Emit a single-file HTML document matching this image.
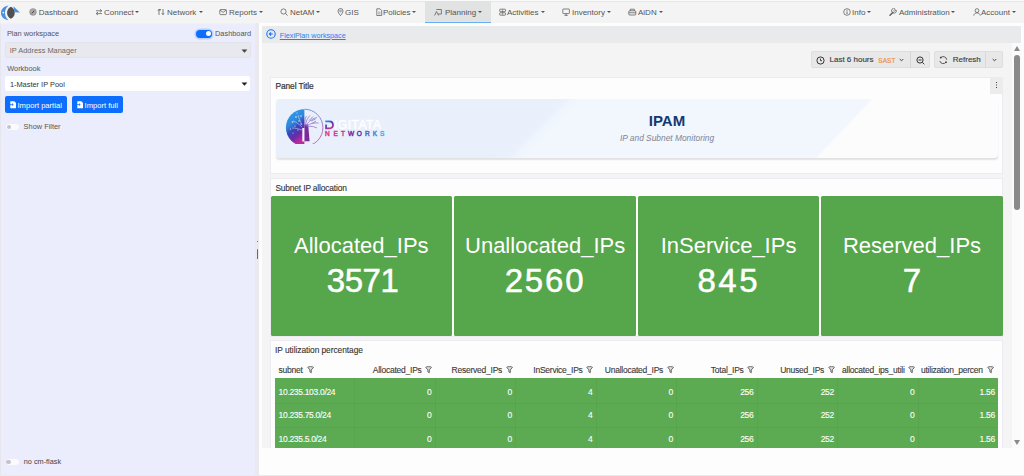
<!DOCTYPE html>
<html><head><meta charset="utf-8">
<style>
*{box-sizing:border-box;margin:0;padding:0}
html,body{width:1024px;height:476px;overflow:hidden;background:#fdfdfd;font-family:"Liberation Sans",sans-serif;}
.abs{position:absolute}
#top{left:0;top:0;width:1024px;height:1px;background:#fafafa}
#nav{left:0;top:1px;width:1024px;height:22px;background:#f4f4f4;border-top:1px solid #e6e6e6}
.ni{position:absolute;top:7.5px;font-size:8px;color:#555;line-height:10px;white-space:nowrap}
.car{width:0;height:0;border-left:2px solid transparent;border-right:2px solid transparent;border-top:2.5px solid #555}
#active{left:425px;top:1px;width:66px;height:22px;background:#e1e2e2;border-bottom:1.5px solid #6aaef3}
#strip{left:0;top:23px;width:1024px;height:2px;background:#fbfbfb}
#side{left:0;top:23px;width:255px;height:453px;background:#ebecfc;border-left:1px solid #e6e6ec;border-top:1px solid #f0f0f6}
#gut{left:255px;top:23px;width:4px;height:453px;background:#e9e9ef}
#content{left:259px;top:23px;width:765px;height:453px;background:#fdfdfd}
#bc{left:262px;top:25.5px;width:759px;height:17px;background:#e9eaec}
#gbg{left:262px;top:42.5px;width:750px;height:406px;background:#f4f4f4}
.lbl{position:absolute;font-size:8px;color:#555;white-space:nowrap}
.sel{position:absolute;border-radius:2px}
.btn{position:absolute;background:#0d6efd;border-radius:2px;color:#fff;font-size:8px;line-height:17px;white-space:nowrap}
.panel{position:absolute;background:#fdfdfd;border:1px solid #ebebf1}
.ptitle{position:absolute;font-size:8px;color:#333;font-weight:bold;white-space:nowrap}
.stat{position:absolute;top:195.6px;height:140.1px;width:182px;background:#56a64b;color:#fff;text-align:center;border-radius:1.5px}
.stat .t{position:absolute;left:0;width:100%;top:232px;font-size:22px}
.stat .v{position:absolute;left:0;width:100%;font-size:33px;letter-spacing:1px;text-indent:1px;-webkit-text-stroke:0.5px #fff}
.th{position:absolute;top:365.1px;font-size:8.5px;letter-spacing:-0.24px;color:#3a3a3a;white-space:nowrap;-webkit-text-stroke:0.12px #3a3a3a}
.cell{position:absolute;font-size:8.5px;letter-spacing:-0.32px;color:#fff;white-space:nowrap;-webkit-text-stroke:0.1px #fff;margin-top:-0.4px}
.vl{position:absolute;top:377.6px;width:1px;height:70px;background:rgba(0,0,0,0.04)}
.hl{position:absolute;left:275px;width:723px;height:1px;background:rgba(0,0,0,0.04)}
</style></head><body>
<div id="top" class="abs"></div>
<div id="nav" class="abs"></div>
<div id="active" class="abs"></div>

<!-- logo -->
<svg class="abs" style="left:0;top:4px" width="22" height="18" viewBox="0 0 22 18">
  <path d="M8.5 1.6 C3.5 2.5 1 5.5 1 9 C1 12.5 3.5 15.5 8.5 16 C6 14 5 11.5 5 9 C5 6.5 6 3.8 8.5 1.6Z" fill="#4a8fe0"/>
  <circle cx="3.3" cy="8.6" r="0.9" fill="#f4f4f4"/>
  <path d="M10.9 2.7 C16 5 16 12.6 10.9 14.8 C5.8 12.6 5.8 5 10.9 2.7 Z" fill="#505050"/>
  <path d="M13.4 2.3 L19.9 8.6 L14.6 8.2 Z" fill="#4a8fe0"/>
</svg>

<!-- nav items -->
<svg class="abs" style="left:29.3px;top:8.3px" width="8.5" height="8.5" viewBox="0 0 8.5 8.5"><circle cx="4" cy="4" r="3.4" fill="#a8a8a8"/><circle cx="4" cy="4" r="3.4" fill="none" stroke="#888" stroke-width="0.5"/><path d="M2.8 5.4 L5.2 2.8" stroke="#444" stroke-width="1"/></svg>
<div class="ni" style="left:38.7px">Dashboard</div>
<svg class="abs" style="left:94.5px;top:8.3px" width="8.5" height="8.5" viewBox="0 0 8.5 8.5"><path d="M1 2.8 H6.5 M5 1.3 L6.8 2.8 L5 4.3 M7 5.6 H1.5 M3 4.1 L1.2 5.6 L3 7.1" fill="none" stroke="#5a5a5a" stroke-width="0.75"/></svg>
<div class="ni" style="left:104px">Connect</div>
<div class="car abs" style="left:135px;top:10.8px"></div>
<svg class="abs" style="left:157px;top:8.3px" width="8.5" height="8.5" viewBox="0 0 8.5 8.5"><path d="M2 7 V1.5 M0.8 2.8 L2 1.3 L3.2 2.8 M6 1 V6.5 M4.8 5.2 L6 6.7 L7.2 5.2 M2 1.5 H4" fill="none" stroke="#5a5a5a" stroke-width="0.75"/></svg>
<div class="ni" style="left:167px">Network</div>
<div class="car abs" style="left:199px;top:10.8px"></div>
<svg class="abs" style="left:219px;top:8.3px" width="8.5" height="8.5" viewBox="0 0 8.5 8.5"><rect x="0.8" y="1.6" width="6.6" height="5" rx="0.8" fill="none" stroke="#5a5a5a" stroke-width="0.75"/><path d="M1 2 L4.1 4.4 L7.2 2" fill="none" stroke="#5a5a5a" stroke-width="0.75"/></svg>
<div class="ni" style="left:229px">Reports</div>
<div class="car abs" style="left:259px;top:10.8px"></div>
<svg class="abs" style="left:280px;top:8.3px" width="8.5" height="8.5" viewBox="0 0 8.5 8.5"><circle cx="3.5" cy="3.5" r="2.6" fill="none" stroke="#5a5a5a" stroke-width="0.75"/><path d="M5.4 5.4 L7.5 7.5" stroke="#5a5a5a" stroke-width="0.9"/></svg>
<div class="ni" style="left:290px">NetAM</div>
<div class="car abs" style="left:316px;top:10.8px"></div>
<svg class="abs" style="left:337px;top:8.3px" width="8.5" height="8.5" viewBox="0 0 8.5 8.5"><path d="M3.5 7.6 C2 5.6 1 4.3 1 3 A2.5 2.5 0 0 1 6 3 C6 4.3 5 5.6 3.5 7.6Z" fill="none" stroke="#5a5a5a" stroke-width="0.75"/><circle cx="3.5" cy="3" r="0.9" fill="none" stroke="#5a5a5a" stroke-width="0.6"/></svg>
<div class="ni" style="left:345px">GIS</div>
<svg class="abs" style="left:375.5px;top:8.3px" width="8.5" height="8.5" viewBox="0 0 8.5 8.5"><path d="M0.8 0.8 H4 L5.7 2.5 V7.5 H0.8 Z" fill="none" stroke="#5a5a5a" stroke-width="0.75"/><path d="M2 4.2 H4.5 M2 5.8 H4.5" stroke="#5a5a5a" stroke-width="0.5"/></svg>
<div class="ni" style="left:383px">Policies</div>
<div class="car abs" style="left:412px;top:10.8px"></div>
<svg class="abs" style="left:434px;top:8.3px" width="8.5" height="8.5" viewBox="0 0 8.5 8.5"><path d="M2.4 1.5 H7.4 V6 H4" fill="none" stroke="#5a5a5a" stroke-width="0.75"/><path d="M0.6 7.5 L2.5 3.5 L4.6 7.5" fill="none" stroke="#5a5a5a" stroke-width="0.75"/></svg>
<div class="ni" style="left:445px">Planning</div>
<div class="car abs" style="left:478px;top:10.8px"></div>
<svg class="abs" style="left:498.5px;top:8.3px" width="8.5" height="8.5" viewBox="0 0 8.5 8.5"><rect x="0.7" y="1.2" width="5.8" height="2.4" rx="0.6" fill="none" stroke="#5a5a5a" stroke-width="0.75"/><rect x="0.7" y="4.8" width="5.8" height="2.4" rx="0.6" fill="none" stroke="#5a5a5a" stroke-width="0.75"/><path d="M3.6 1.2 V7.2" stroke="#5a5a5a" stroke-width="0.5"/></svg>
<div class="ni" style="left:507px">Activities</div>
<div class="car abs" style="left:541px;top:10.8px"></div>
<svg class="abs" style="left:562px;top:8.3px" width="8.5" height="8.5" viewBox="0 0 8.5 8.5"><rect x="0.8" y="1" width="6.6" height="4.6" rx="0.6" fill="none" stroke="#5a5a5a" stroke-width="0.75"/><path d="M2.5 7.4 H5.7 M4.1 5.6 V7.4" stroke="#5a5a5a" stroke-width="0.75"/></svg>
<div class="ni" style="left:572px">Inventory</div>
<div class="car abs" style="left:607px;top:10.8px"></div>
<svg class="abs" style="left:628px;top:8.3px" width="8.5" height="8.5" viewBox="0 0 8.5 8.5"><rect x="0.8" y="2.8" width="7" height="4.2" rx="0.8" fill="none" stroke="#5a5a5a" stroke-width="0.75"/><path d="M2.3 2.8 V1.2 H6.3 V2.8 M0.8 4.8 H7.8" fill="none" stroke="#5a5a5a" stroke-width="0.75"/></svg>
<div class="ni" style="left:638px">AiDN</div>
<div class="car abs" style="left:659px;top:10.8px"></div>
<svg class="abs" style="left:843px;top:8.3px" width="8.5" height="8.5" viewBox="0 0 8.5 8.5"><circle cx="4" cy="4" r="3.3" fill="none" stroke="#5a5a5a" stroke-width="0.75"/><path d="M4 3.4 V6" stroke="#5a5a5a" stroke-width="0.9"/><circle cx="4" cy="2.2" r="0.5" fill="#5a5a5a"/></svg>
<div class="ni" style="left:852px">Info</div>
<div class="car abs" style="left:867px;top:10.8px"></div>
<svg class="abs" style="left:889px;top:8.3px" width="8.5" height="8.5" viewBox="0 0 8.5 8.5"><path d="M1 7.2 L4 4.2" stroke="#5a5a5a" stroke-width="1.4" stroke-linecap="round"/><path d="M3.6 4.4 A2.1 2.1 0 1 1 6.2 1.2 L5 2.6 L5.8 3.4 L7.1 2.1 A2.1 2.1 0 0 1 3.9 4.7" fill="none" stroke="#5a5a5a" stroke-width="0.75"/></svg>
<div class="ni" style="left:899px">Administration</div>
<div class="car abs" style="left:951px;top:10.8px"></div>
<svg class="abs" style="left:973px;top:8.3px" width="8.5" height="8.5" viewBox="0 0 8.5 8.5"><circle cx="4" cy="2.6" r="1.9" fill="none" stroke="#5a5a5a" stroke-width="0.75"/><path d="M0.8 7.6 C1 5.6 2.4 4.9 4 4.9 C5.6 4.9 7 5.6 7.2 7.6" fill="none" stroke="#5a5a5a" stroke-width="0.75"/></svg>
<div class="ni" style="left:981px">Account</div>
<div class="car abs" style="left:1012px;top:10.8px"></div>

<div id="strip" class="abs"></div>
<div id="side" class="abs"></div>
<div id="gut" class="abs"></div>
<div id="content" class="abs"></div>
<div id="bc" class="abs"></div>
<div id="gbg" class="abs"></div>

<div class="abs" style="left:256.8px;top:241.3px;width:1.2px;height:1.2px;background:#777"></div>
<div class="abs" style="left:256.8px;top:248.7px;width:1.3px;height:10.3px;background:#6a6a6a;border-radius:0.5px"></div>
<!-- sidebar -->
<div class="lbl" style="left:6.9px;top:28.5px;font-size:7.4px;">Plan workspace</div>
<div class="abs" style="left:196px;top:30px;width:15.5px;height:7.5px;border-radius:4px;background:#0d6efd;box-shadow:0 0 0 1.6px rgba(13,110,253,0.22)"></div>
<div class="abs" style="left:205.5px;top:31.2px;width:5px;height:5px;border-radius:50%;background:#fff"></div>
<div class="lbl" style="left:215px;top:28.6px;font-size:7.4px;">Dashboard</div>
<div class="sel" style="left:5px;top:41.5px;width:245.5px;height:16px;background:#e8e9ef;border:1px solid #e2e3ec"></div>
<div class="lbl" style="left:9.8px;top:46px;color:#6a6a6a;font-size:7.4px;">IP Address Manager</div>
<svg class="abs" style="left:240.5px;top:48.5px" width="7" height="4.5" viewBox="0 0 7 4.5"><path d="M0.5 0.4 H6.4 L3.45 3.7 Z" fill="#454545"/></svg>
<div class="lbl" style="left:7.2px;top:63.7px;font-size:7.4px;">Workbook</div>
<div class="sel" style="left:5.3px;top:76px;width:245.2px;height:15px;background:#fff"></div>
<div class="lbl" style="left:9.9px;top:80px;color:#333;font-size:7.4px;">1-Master IP Pool</div>
<svg class="abs" style="left:240.5px;top:82px" width="7" height="4.5" viewBox="0 0 7 4.5"><path d="M0.5 0.4 H6.4 L3.45 3.7 Z" fill="#222"/></svg>
<div class="btn" style="left:4.7px;top:95.9px;width:62.5px;height:16.8px"></div>
<div class="btn" style="left:71.8px;top:95.9px;width:51.2px;height:16.8px"></div>
<svg class="abs" style="left:9.5px;top:101px" width="6.5" height="7.5" viewBox="0 0 6.5 7.5"><path d="M0.3 0.3 H4.4 L6.2 2.1 V7.2 H0.3 Z" fill="#fff"/><path d="M0 3.6 H3.2 M2 2.5 L3.2 3.6 L2 4.7" fill="none" stroke="#0d6efd" stroke-width="0.8"/></svg>
<svg class="abs" style="left:76.6px;top:101px" width="6.5" height="7.5" viewBox="0 0 6.5 7.5"><path d="M0.3 0.3 H4.4 L6.2 2.1 V7.2 H0.3 Z" fill="#fff"/><path d="M0 3.6 H3.2 M2 2.5 L3.2 3.6 L2 4.7" fill="none" stroke="#0d6efd" stroke-width="0.8"/></svg>
<div class="lbl" style="left:17.5px;top:100.6px;color:#fff;font-size:7.6px">Import partial</div>
<div class="lbl" style="left:84.6px;top:100.6px;color:#fff;font-size:7.6px">Import full</div>
<div class="abs" style="left:5.7px;top:123.6px;width:13.2px;height:6.8px;border-radius:3.5px;background:#fbfbfe"></div>
<div class="abs" style="left:6.6px;top:124.7px;width:4.5px;height:4.5px;border-radius:50%;background:#c4c4c8"></div>
<div class="lbl" style="left:23.6px;top:122.4px;font-size:7.4px;">Show Filter</div>
<div class="abs" style="left:5.5px;top:458.6px;width:13.6px;height:6.6px;border-radius:3.5px;background:#fbfbfe"></div>
<div class="abs" style="left:6.4px;top:459.6px;width:4.6px;height:4.6px;border-radius:50%;background:#c4c4c8"></div>
<div class="lbl" style="left:23.8px;top:457.4px;font-size:7.3px;color:#444">no cm-flask</div>

<!-- breadcrumb -->
<svg class="abs" style="left:266px;top:29px" width="10" height="10" viewBox="0 0 10 10"><circle cx="5" cy="5" r="4.2" fill="none" stroke="#1a73f5" stroke-width="1.1"/><path d="M6.8 5 H3.6 M5 3.4 L3.4 5 L5 6.6" fill="none" stroke="#1a73f5" stroke-width="1.1"/></svg>
<div class="lbl" style="left:279.8px;top:30.6px;font-size:7.2px;color:#2f7af5;text-decoration:underline;text-decoration-thickness:0.6px;text-underline-offset:1px">FlexiPlan workspace</div>

<!-- time picker -->
<div class="abs" style="left:811px;top:51px;width:119px;height:17px;background:#e8e8e8;border:1px solid #dedede;border-radius:2px"></div>
<div class="abs" style="left:910px;top:51px;width:1px;height:17px;background:#d6d6d6"></div>
<div class="abs" style="left:934px;top:51px;width:69px;height:17px;background:#e8e8e8;border:1px solid #dedede;border-radius:2px"></div>
<div class="abs" style="left:985px;top:51px;width:1px;height:17px;background:#d9d9d9"></div>
<svg class="abs" style="left:816px;top:55.5px" width="9" height="9" viewBox="0 0 9 9"><circle cx="4.5" cy="4.5" r="3.6" fill="none" stroke="#333" stroke-width="1"/><path d="M4.5 2.5 V4.7 H6" fill="none" stroke="#333" stroke-width="0.9"/></svg>
<div class="lbl" style="left:829.5px;top:55.2px;color:#3a3d45;-webkit-text-stroke:0.15px #3a3d45">Last 6 hours</div>
<div class="lbl" style="left:878.3px;top:56.5px;color:#e8904a;font-size:6.4px;-webkit-text-stroke:0.2px #e8904a;letter-spacing:0.1px">SAST</div>
<svg class="abs" style="left:899px;top:57.5px" width="5" height="4" viewBox="0 0 5 4"><path d="M0.7 1 L2.5 2.8 L4.3 1" fill="none" stroke="#333" stroke-width="0.9"/></svg>
<svg class="abs" style="left:915.5px;top:55.5px" width="9" height="9" viewBox="0 0 9 9"><circle cx="4" cy="4" r="3.1" fill="none" stroke="#333" stroke-width="1"/><path d="M2.5 4 H5.5 M6.3 6.3 L8.3 8.3" stroke="#333" stroke-width="1"/></svg>
<svg class="abs" style="left:939px;top:55.5px" width="9" height="9" viewBox="0 0 9 9"><path d="M1.77 1.58 A3.5 3.5 0 0 1 7.69 3.79 M7.00 6.21 A3.5 3.5 0 0 1 0.82 5.01" fill="none" stroke="#3a3d45" stroke-width="0.85"/><circle cx="1.77" cy="1.58" r="0.9" fill="#3a3d45"/><circle cx="7.00" cy="6.21" r="0.9" fill="#3a3d45"/></svg>
<div class="lbl" style="left:952.8px;top:55.2px;color:#3a3d45;-webkit-text-stroke:0.15px #3a3d45">Refresh</div>
<svg class="abs" style="left:991.5px;top:57.5px" width="5" height="4" viewBox="0 0 5 4"><path d="M0.7 1 L2.5 2.8 L4.3 1" fill="none" stroke="#333" stroke-width="0.9"/></svg>

<!-- panel 1 -->
<div class="panel" style="left:270px;top:77px;width:733px;height:96.6px"></div>
<div class="abs" style="left:990px;top:77px;width:12.5px;height:17px;background:#ececec"></div>
<div class="abs" style="left:995.5px;top:82px;width:1.2px;height:1.2px;background:#444;box-shadow:0 2.5px 0 #444,0 5px 0 #444"></div>
<div class="ptitle" style="left:275.5px;top:80.6px;font-weight:normal;font-size:8.4px;letter-spacing:-0.1px;-webkit-text-stroke:0.2px #333">Panel Title</div>
<div class="abs" style="left:275.5px;top:98.5px;width:722.5px;height:59.5px;border-radius:4px;overflow:hidden;background:#fcfcfd;box-shadow:0 2px 1.5px -0.5px rgba(0,0,0,0.11)"><svg width="722.5" height="59.5" viewBox="0 0 722.5 59.5" style="display:block"><defs><filter id="bl" x="-5%" y="-20%" width="110%" height="140%"><feGaussianBlur stdDeviation="1.2"/></filter><filter id="bl2" x="-5%" y="-20%" width="110%" height="140%"><feGaussianBlur stdDeviation="4"/></filter></defs><path d="M-10 -10 H605.5 L529.5 70 H-10 Z" fill="#f2f6fd" filter="url(#bl)"/><path d="M-10 -10 H304 L224 70 H-10 Z" fill="#e9f0fc" filter="url(#bl2)"/></svg></div>
<!-- logo banner -->
<svg class="abs" style="left:280px;top:104px" width="110" height="40" viewBox="280 104 110 40">
  <defs>
   <linearGradient id="lg1" x1="0" y1="0" x2="0.4" y2="1"><stop offset="0" stop-color="#2ea6ec"/><stop offset="0.45" stop-color="#2f86dc"/><stop offset="0.62" stop-color="#3a44bb"/><stop offset="0.82" stop-color="#6a2ba8"/><stop offset="1" stop-color="#bb2a9a"/></linearGradient>
   <linearGradient id="lg2" x1="0" y1="0" x2="0" y2="1"><stop offset="0" stop-color="#5a7ad8"/><stop offset="1" stop-color="#d03a9a"/></linearGradient>
   <linearGradient id="lg3" x1="0" y1="0" x2="0.6" y2="1"><stop offset="0" stop-color="#2fa0ea"/><stop offset="0.5" stop-color="#4a3ab8"/><stop offset="1" stop-color="#d0308f"/></linearGradient>
  </defs>
  <path d="M304.4 109.2 A18.5 18.5 0 0 0 304.4 146.2 Z" fill="url(#lg1)"/>
  <path d="M304.4 109.2 A18.5 18.5 0 0 1 304.4 146.2" fill="none" stroke="url(#lg2)" stroke-width="0.8"/>
  <path d="M304.4 124.5 L308.2 124.5 C308.6 130 309.2 136 309.6 141.3 L304.4 141.3 Z" fill="#7a2a9c"/>
  <path d="M302.3 128 L304.3 128 L304.3 141.5 L302.3 141.5 Z" fill="#f2f4fd"/>
  <g fill="none" stroke="#8a70c8" stroke-width="0.9" opacity="0.85">
    <path d="M306 126 C308 122 311 119 317 117.5"/>
    <path d="M306.5 126 C310 123.5 314 122.5 318.5 123"/>
    <path d="M305.5 125 C306 121 307.5 118 310 115.5"/>
    <path d="M307 126.5 C311 126 314 126.5 317 128"/>
    <path d="M305 125.5 C304.5 121 305 118 306.5 116"/>
    <path d="M309 120.5 L313 116.5 M311 121 L315.5 119 M312 123.5 L316 121"/>
  </g>
  <g fill="#ffffff" opacity="0.9">
    <circle cx="296" cy="117" r="0.8"/><circle cx="292.5" cy="122" r="0.7"/><circle cx="299" cy="121" r="0.7"/><circle cx="295" cy="126" r="0.6"/>
    <circle cx="301" cy="116" r="0.7"/><circle cx="290.5" cy="129" r="0.6"/><circle cx="298" cy="130" r="0.6"/><circle cx="293" cy="133" r="0.5"/><circle cx="301" cy="124" r="0.6"/><circle cx="297" cy="113" r="0.5"/>
  </g>
  <g stroke="#ffffff" stroke-width="0.6" opacity="0.7" fill="none"><path d="M302 127 C299 124 296 122 293 121 M302 125 C300 121 299 118 298 115 M302 130 C299 129 296 128 292 128"/></g>
  <path d="M325.2 120.6 H329.5 C332.6 120.6 333.9 122.7 333.9 125 C333.9 127.3 332.6 129.2 329.5 129.2 H325.2 V124.6 H326.9 V127.6 H329.3 C331.2 127.6 332.1 126.5 332.1 125 C332.1 123.4 331.2 122.2 329.3 122.2 H325.2 Z" fill="url(#lg3)"/>
  <text x="334" y="129.3" font-family="Liberation Sans" font-size="12.1" fill="#ffffff" stroke="#ffffff" stroke-width="0.4" letter-spacing="0.45">IGITATA</text>
  <g font-family="Liberation Sans" font-size="6.5" stroke-width="0.45" style="paint-order:stroke">
    <text x="325" y="135.9" fill="#d83a8c" stroke="#d83a8c">N</text><text x="333.4" y="135.9" fill="#d23b8e" stroke="#d23b8e">E</text><text x="341" y="135.9" fill="#c23a92" stroke="#c23a92">T</text>
    <text x="348" y="135.9" fill="#7b2fa6" stroke="#7b2fa6">W</text><text x="356.8" y="135.9" fill="#5a3ab4" stroke="#5a3ab4">O</text><text x="364.9" y="135.9" fill="#4a68c8" stroke="#4a68c8">R</text>
    <text x="372.8" y="135.9" fill="#4a8ad8" stroke="#4a8ad8">K</text><text x="380" y="135.9" fill="#4ab2ea" stroke="#4ab2ea">S</text>
  </g>
</svg>
<div class="abs" style="left:599px;top:111.5px;width:136px;text-align:center;font-size:15px;font-weight:bold;color:#163a6e">IPAM</div>
<div class="abs" style="left:599px;top:133.2px;width:136px;text-align:center;font-size:8.4px;font-style:italic;color:#7d8596">IP and Subnet Monitoring</div>

<!-- panel 2 -->
<div class="panel" style="left:270px;top:178.4px;width:733px;height:158.2px"></div>
<div class="ptitle" style="left:275.4px;top:182.6px;font-weight:normal;color:#333;font-size:8.4px;letter-spacing:-0.15px;-webkit-text-stroke:0.12px #333">Subnet IP allocation</div>
<div class="stat" style="left:270.5px;width:181.6px"><div class="t" style="top:37px">Allocated_IPs</div><div class="v" style="top:66.5px;left:1.5px;letter-spacing:-0.5px;text-indent:-0.5px">3571</div></div>
<div class="stat" style="left:454.2px;width:181.9px"><div class="t" style="top:37px">Unallocated_IPs</div><div class="v" style="top:66.5px;left:-1px;letter-spacing:1.8px;text-indent:1.8px">2560</div></div>
<div class="stat" style="left:638px;width:181.1px"><div class="t" style="top:37px">InService_IPs</div><div class="v" style="top:66.5px;left:-1px;letter-spacing:2.5px;text-indent:2.5px">845</div></div>
<div class="stat" style="left:821.2px;width:181.6px"><div class="t" style="top:37px">Reserved_IPs</div><div class="v" style="top:66.5px;letter-spacing:0px;text-indent:0px">7</div></div>

<!-- panel 3 -->
<div class="panel" style="left:270px;top:340.3px;width:733px;height:120px"></div>
<div class="ptitle" style="left:275.1px;top:344.8px;font-weight:normal;color:#333;font-size:8.4px;letter-spacing:-0.06px;-webkit-text-stroke:0.1px #333">IP utilization percentage</div>
<div class="abs" style="left:275px;top:377.6px;width:723.3px;height:70px;background:#5cab53"></div>

<div id="tbl"><div class="th" style="left:278.6px">subnet</div>
<svg class="abs" style="left:307.0px;top:366.2px" width="7.2" height="7.4" viewBox="0 0 7.2 7.4"><path d="M0.7 1.3 C0.7 0.4 6.5 0.4 6.5 1.3 L4.3 3.9 V6.7 L2.9 6 V3.9 Z" fill="#ddd" stroke="#6a6a6a" stroke-width="1" stroke-linejoin="round"/></svg>
<div class="cell" style="left:278.6px;top:387.2px">10.235.103.0/24</div>
<div class="cell" style="left:278.6px;top:410.6px">10.235.75.0/24</div>
<div class="cell" style="left:278.6px;top:434.1px">10.235.5.0/24</div>
<div class="th" style="right:602.4px;text-align:right">Allocated_IPs</div>
<svg class="abs" style="left:425.2px;top:366.2px" width="7.2" height="7.4" viewBox="0 0 7.2 7.4"><path d="M0.7 1.3 C0.7 0.4 6.5 0.4 6.5 1.3 L4.3 3.9 V6.7 L2.9 6 V3.9 Z" fill="#ddd" stroke="#6a6a6a" stroke-width="1" stroke-linejoin="round"/></svg>
<div class="vl" style="left:354.4px"></div>
<div class="cell" style="right:592.6px;top:387.2px">0</div>
<div class="cell" style="right:592.6px;top:410.6px">0</div>
<div class="cell" style="right:592.6px;top:434.1px">0</div>
<div class="th" style="right:521.9px;text-align:right">Reserved_IPs</div>
<svg class="abs" style="left:505.7px;top:366.2px" width="7.2" height="7.4" viewBox="0 0 7.2 7.4"><path d="M0.7 1.3 C0.7 0.4 6.5 0.4 6.5 1.3 L4.3 3.9 V6.7 L2.9 6 V3.9 Z" fill="#ddd" stroke="#6a6a6a" stroke-width="1" stroke-linejoin="round"/></svg>
<div class="vl" style="left:434.9px"></div>
<div class="cell" style="right:512.1px;top:387.2px">0</div>
<div class="cell" style="right:512.1px;top:410.6px">0</div>
<div class="cell" style="right:512.1px;top:434.1px">0</div>
<div class="th" style="right:441.4px;text-align:right">InService_IPs</div>
<svg class="abs" style="left:586.2px;top:366.2px" width="7.2" height="7.4" viewBox="0 0 7.2 7.4"><path d="M0.7 1.3 C0.7 0.4 6.5 0.4 6.5 1.3 L4.3 3.9 V6.7 L2.9 6 V3.9 Z" fill="#ddd" stroke="#6a6a6a" stroke-width="1" stroke-linejoin="round"/></svg>
<div class="vl" style="left:515.4px"></div>
<div class="cell" style="right:431.6px;top:387.2px">4</div>
<div class="cell" style="right:431.6px;top:410.6px">4</div>
<div class="cell" style="right:431.6px;top:434.1px">4</div>
<div class="th" style="right:360.9px;text-align:right">Unallocated_IPs</div>
<svg class="abs" style="left:666.7px;top:366.2px" width="7.2" height="7.4" viewBox="0 0 7.2 7.4"><path d="M0.7 1.3 C0.7 0.4 6.5 0.4 6.5 1.3 L4.3 3.9 V6.7 L2.9 6 V3.9 Z" fill="#ddd" stroke="#6a6a6a" stroke-width="1" stroke-linejoin="round"/></svg>
<div class="vl" style="left:595.9px"></div>
<div class="cell" style="right:351.1px;top:387.2px">0</div>
<div class="cell" style="right:351.1px;top:410.6px">0</div>
<div class="cell" style="right:351.1px;top:434.1px">0</div>
<div class="th" style="right:280.4px;text-align:right">Total_IPs</div>
<svg class="abs" style="left:747.2px;top:366.2px" width="7.2" height="7.4" viewBox="0 0 7.2 7.4"><path d="M0.7 1.3 C0.7 0.4 6.5 0.4 6.5 1.3 L4.3 3.9 V6.7 L2.9 6 V3.9 Z" fill="#ddd" stroke="#6a6a6a" stroke-width="1" stroke-linejoin="round"/></svg>
<div class="vl" style="left:676.4px"></div>
<div class="cell" style="right:270.6px;top:387.2px">256</div>
<div class="cell" style="right:270.6px;top:410.6px">256</div>
<div class="cell" style="right:270.6px;top:434.1px">256</div>
<div class="th" style="right:199.9px;text-align:right">Unused_IPs</div>
<svg class="abs" style="left:827.7px;top:366.2px" width="7.2" height="7.4" viewBox="0 0 7.2 7.4"><path d="M0.7 1.3 C0.7 0.4 6.5 0.4 6.5 1.3 L4.3 3.9 V6.7 L2.9 6 V3.9 Z" fill="#ddd" stroke="#6a6a6a" stroke-width="1" stroke-linejoin="round"/></svg>
<div class="vl" style="left:756.9px"></div>
<div class="cell" style="right:190.1px;top:387.2px">252</div>
<div class="cell" style="right:190.1px;top:410.6px">252</div>
<div class="cell" style="right:190.1px;top:434.1px">252</div>
<div class="th" style="right:119.4px;text-align:right">allocated_ips_utili</div>
<svg class="abs" style="left:908.2px;top:366.2px" width="7.2" height="7.4" viewBox="0 0 7.2 7.4"><path d="M0.7 1.3 C0.7 0.4 6.5 0.4 6.5 1.3 L4.3 3.9 V6.7 L2.9 6 V3.9 Z" fill="#ddd" stroke="#6a6a6a" stroke-width="1" stroke-linejoin="round"/></svg>
<div class="vl" style="left:837.4px"></div>
<div class="cell" style="right:109.6px;top:387.2px">0</div>
<div class="cell" style="right:109.6px;top:410.6px">0</div>
<div class="cell" style="right:109.6px;top:434.1px">0</div>
<div class="th" style="left:921px;width:62px;overflow:hidden">utilization_percentage</div>
<svg class="abs" style="left:987.2px;top:366.2px" width="7.2" height="7.4" viewBox="0 0 7.2 7.4"><path d="M0.7 1.3 C0.7 0.4 6.5 0.4 6.5 1.3 L4.3 3.9 V6.7 L2.9 6 V3.9 Z" fill="#ddd" stroke="#6a6a6a" stroke-width="1" stroke-linejoin="round"/></svg>
<div class="vl" style="left:917.9px"></div>
<div class="cell" style="right:29.2px;top:387.2px">1.56</div>
<div class="cell" style="right:29.2px;top:410.6px">1.56</div>
<div class="cell" style="right:29.2px;top:434.1px">1.56</div>
<div class="hl" style="top:403.3px"></div>
<div class="hl" style="top:427.1px"></div></div><!--/tbl-->

<!-- white bottom cover -->
<div class="abs" style="left:259px;top:448px;width:765px;height:27px;background:#fdfdfd"></div>
<div class="abs" style="left:0;top:475px;width:1024px;height:1px;background:#ebebeb"></div>

<!-- scrollbar -->
<div class="abs" style="left:1012px;top:43px;width:10px;height:405px;background:#fbfbfb"></div>
<div class="abs" style="left:1014px;top:54.5px;width:6px;height:155px;border-radius:3px;background:#8a8a8a"></div>
<div class="abs" style="left:1013.5px;top:46px;width:0;height:0;border-left:3.4px solid transparent;border-right:3.4px solid transparent;border-bottom:5px solid #8a8a8a"></div>
<div class="abs" style="left:1013.5px;top:440px;width:0;height:0;border-left:3.4px solid transparent;border-right:3.4px solid transparent;border-top:5px solid #8a8a8a"></div>
</body></html>
